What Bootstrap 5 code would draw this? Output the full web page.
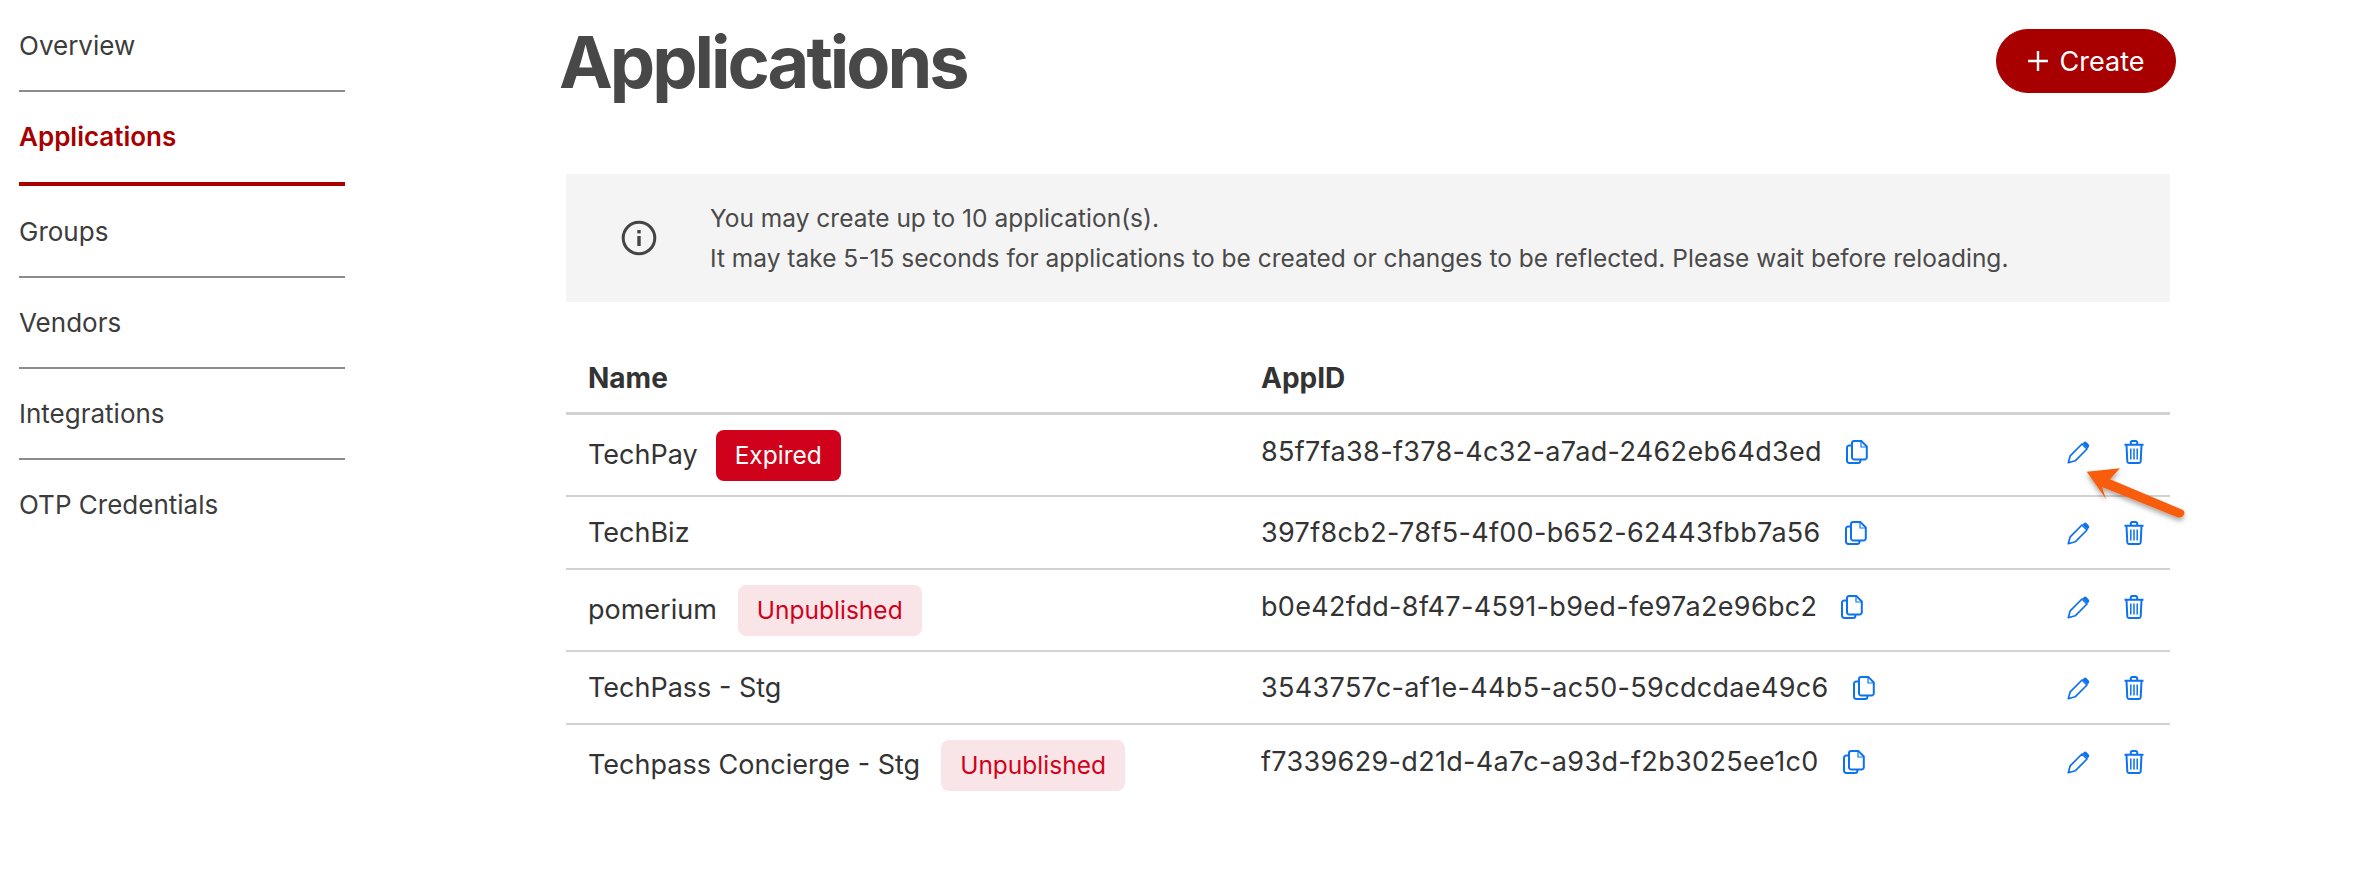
<!doctype html>
<html lang="en">
<head>
<meta charset="utf-8">
<title>Applications</title>
<link href="https://cdn.jsdelivr.net/npm/bootstrap@5.3.0/dist/css/bootstrap.min.css" rel="stylesheet">
<style>
body{font-family:Inter,"Liberation Sans",sans-serif;color:#333;background:#fff;font-size:26px;line-height:40px;min-height:874px;position:relative}
.side-col{width:326px;margin-left:19px;flex:none}
.side-item{display:block;height:91px;padding-top:25px;color:#3c3c3c;text-decoration:none;border-bottom:2px solid #8c8c8c}
.side-item:first-child{height:92px;padding-top:26px}
.side-item:nth-child(3){height:91.500px;padding-top:26px}
.side-item:last-child{border-bottom:0}
.side-item.is-on{color:#a80000;font-weight:600;height:94px;padding-top:25px;border-bottom:4px solid #a80000}
.main-col{width:1604px;margin-left:221px;flex:none}
.head-row{margin:0 -6px 0 -6px;height:174px;padding-top:29px}
.page-title{font-size:72px;line-height:72px;font-weight:700;color:#484848;margin:-3px 0 0 -1px;letter-spacing:-3px}
.create-btn{--bs-btn-bg:#a80000;--bs-btn-color:#fff;--bs-btn-hover-bg:#a80000;--bs-btn-hover-color:#fff;--bs-btn-border-color:#a80000;--bs-btn-hover-border-color:#a80000;width:180px;height:64px;font-size:27px;line-height:32px;border-radius:32px;gap:12px}
.create-btn span{padding-top:2px}
.info-box{height:128px;background:#f4f4f4;color:#4a4a4a;font-size:24.5px;line-height:40px;padding:0 0 0 55px;gap:53px;margin-bottom:57px}
.apps-table{--bs-table-color:#333;--bs-table-border-color:#d2d2d2;margin:0;table-layout:fixed;font-size:27px;line-height:42px}
.apps-table th{font-weight:700;border-bottom:3px solid #d2d2d2;padding:0 0 15px 22px;font-size:28px;line-height:38px}
.apps-table td{padding:14.500px 0 14.500px 22px;vertical-align:middle;border-bottom:2px solid #d2d2d2}
.apps-table tr:last-child td{border-bottom:0}
.apps-table th.id-cell{padding-left:0}
.apps-table td.id-cell{padding:15px 0 0;vertical-align:top;letter-spacing:.33px}
.apps-table td.act-td{padding:15px 0 0;vertical-align:top}
.apps-table tbody tr:nth-child(odd) td.id-cell,.apps-table tbody tr:nth-child(odd) td.act-td{padding-top:16px}
.name-wrap{gap:21px}
.tag-on,.tag-off{display:inline-flex;align-items:center;height:51px;padding:0 19px;border-radius:8px;font-size:24.5px}
.tag-on{background:#d0021b;color:#fff;margin-left:-3px}
.tag-off{background:#f9e5e8;color:#d0021b}
.ico{color:#0d72ee;flex:none;display:block}
.ico-copy{margin-left:22px}
.act-cell{gap:33px;padding-left:137px;height:42px}
.arrow-over{position:absolute;left:2070px;top:452px;pointer-events:none}
</style>
</head>
<body class="m-0">
<svg width="0" height="0" class="position-absolute">
<defs>
<symbol id="i-copy" viewBox="0 0 24 24"><path d="M8 5.500H5.200A2.200 2.200 0 0 0 3 7.700v13a2.200 2.200 0 0 0 2.200 2.200h9a2.200 2.200 0 0 0 2.200-2.200v-1.200" fill="none" stroke="currentColor" stroke-width="2"/><path d="M8 3.300A2.200 2.200 0 0 1 10.200 1.100h7.300l5.300 5.400v10.800a2.200 2.200 0 0 1-2.200 2.200h-10.400a2.200 2.200 0 0 1-2.200-2.200z" fill="none" stroke="currentColor" stroke-width="2" stroke-linejoin="round"/><path d="M17 1.500v5.500h5.500" fill="none" stroke="currentColor" stroke-width="1.200"/></symbol>
<symbol id="i-pen" viewBox="0 0 24 24"><path d="M1.300 22.700l1.900-6.900L15 4l5 5L8.200 20.800z" fill="none" stroke="currentColor" stroke-width="1.700" stroke-linejoin="round"/><path d="M16.800 2.300a2 2 0 0 1 2.800 0l2.100 2.100a2 2 0 0 1 0 2.800l-1.200 1.200-5-5z" fill="currentColor"/></symbol>
<symbol id="i-bin" viewBox="0 0 20 24"><path d="M.5 4.800h19M6.800 4.500V2.500A1.500 1.500 0 0 1 8.300 1h3.400a1.500 1.500 0 0 1 1.500 1.500v2M2.500 5l.8 16.500A1.700 1.700 0 0 0 5 23h10a1.700 1.700 0 0 0 1.700-1.500L17.500 5" fill="none" stroke="currentColor" stroke-width="2"/><path d="M6.800 8.500v11M10 8.500v11M13.200 8.500v11" fill="none" stroke="currentColor" stroke-width="1.500"/></symbol>
</defs>
</svg>
<div class="d-flex">
  <nav class="side-col">
    <a class="side-item" href="#">Overview</a>
    <a class="side-item is-on" href="#">Applications</a>
    <a class="side-item" href="#">Groups</a>
    <a class="side-item" href="#">Vendors</a>
    <a class="side-item" href="#">Integrations</a>
    <a class="side-item" href="#">OTP Credentials</a>
  </nav>
  <main class="main-col">
    <div class="head-row d-flex justify-content-between align-items-start">
      <h1 class="page-title">Applications</h1>
      <a class="btn create-btn d-flex align-items-center justify-content-center p-0" href="#">
        <svg width="20" height="20" viewBox="0 0 20 20" aria-hidden="true"><path d="M10 0v20M0 10h20" stroke="currentColor" stroke-width="2.400"/></svg>
        <span>Create</span>
      </a>
    </div>
    <div class="info-box d-flex align-items-center">
      <svg width="36" height="36" viewBox="0 0 36 36" class="flex-none" aria-hidden="true"><circle cx="18" cy="18" r="15.800" fill="none" stroke="#444" stroke-width="3"/><rect x="16.300" y="16" width="3.400" height="10" fill="#444"/><rect x="16.300" y="10" width="3.400" height="3.400" fill="#444"/></svg>
      <div>You may create up to 10 application(s).<br>It may take 5-15 seconds for applications to be created or changes to be reflected. Please wait before reloading.</div>
    </div>
    <table class="table apps-table">
      <colgroup><col style="width:695px"><col style="width:669px"><col></colgroup>
      <thead><tr><th>Name</th><th class="id-cell">AppID</th><th></th></tr></thead>
      <tbody>
        <tr>
          <td><div class="d-flex align-items-center name-wrap">TechPay<span class="tag-on">Expired</span></div></td>
          <td class="id-cell"><div class="d-flex align-items-center">85f7fa38-f378-4c32-a7ad-2462eb64d3ed<svg class="ico ico-copy" width="24" height="24"><use href="#i-copy"/></svg></div></td>
          <td class="act-td"><div class="d-flex align-items-center act-cell"><svg class="ico" width="24" height="24"><use href="#i-pen"/></svg><svg class="ico" width="20" height="24"><use href="#i-bin"/></svg></div></td>
        </tr>
        <tr>
          <td><div class="d-flex align-items-center name-wrap">TechBiz</div></td>
          <td class="id-cell"><div class="d-flex align-items-center">397f8cb2-78f5-4f00-b652-62443fbb7a56<svg class="ico ico-copy" width="24" height="24"><use href="#i-copy"/></svg></div></td>
          <td class="act-td"><div class="d-flex align-items-center act-cell"><svg class="ico" width="24" height="24"><use href="#i-pen"/></svg><svg class="ico" width="20" height="24"><use href="#i-bin"/></svg></div></td>
        </tr>
        <tr>
          <td><div class="d-flex align-items-center name-wrap">pomerium<span class="tag-off">Unpublished</span></div></td>
          <td class="id-cell"><div class="d-flex align-items-center">b0e42fdd-8f47-4591-b9ed-fe97a2e96bc2<svg class="ico ico-copy" width="24" height="24"><use href="#i-copy"/></svg></div></td>
          <td class="act-td"><div class="d-flex align-items-center act-cell"><svg class="ico" width="24" height="24"><use href="#i-pen"/></svg><svg class="ico" width="20" height="24"><use href="#i-bin"/></svg></div></td>
        </tr>
        <tr>
          <td><div class="d-flex align-items-center name-wrap">TechPass - Stg</div></td>
          <td class="id-cell"><div class="d-flex align-items-center">3543757c-af1e-44b5-ac50-59cdcdae49c6<svg class="ico ico-copy" width="24" height="24"><use href="#i-copy"/></svg></div></td>
          <td class="act-td"><div class="d-flex align-items-center act-cell"><svg class="ico" width="24" height="24"><use href="#i-pen"/></svg><svg class="ico" width="20" height="24"><use href="#i-bin"/></svg></div></td>
        </tr>
        <tr>
          <td><div class="d-flex align-items-center name-wrap">Techpass Concierge - Stg<span class="tag-off">Unpublished</span></div></td>
          <td class="id-cell"><div class="d-flex align-items-center">f7339629-d21d-4a7c-a93d-f2b3025ee1c0<svg class="ico ico-copy" width="24" height="24"><use href="#i-copy"/></svg></div></td>
          <td class="act-td"><div class="d-flex align-items-center act-cell"><svg class="ico" width="24" height="24"><use href="#i-pen"/></svg><svg class="ico" width="20" height="24"><use href="#i-bin"/></svg></div></td>
        </tr>
      </tbody>
    </table>
  </main>
</div>
<svg class="arrow-over" width="130" height="75" viewBox="0 0 130 75" aria-hidden="true">
  <defs><filter id="arrow-sh" x="-20%" y="-20%" width="140%" height="150%"><feDropShadow dx="0" dy="3" stdDeviation="2.500" flood-color="#000" flood-opacity=".35"/></filter></defs>
  <path d="M16.700 19.700L50 16.300 40 27.300 113 58Q116 61 113 64 111 66 108 65.500L32 35 36 47z" fill="#f85c0a" filter="url(#arrow-sh)"/>
</svg>
<script src="https://cdn.jsdelivr.net/npm/bootstrap@5.3.0/dist/js/bootstrap.bundle.min.js"></script>
</body>
</html>
